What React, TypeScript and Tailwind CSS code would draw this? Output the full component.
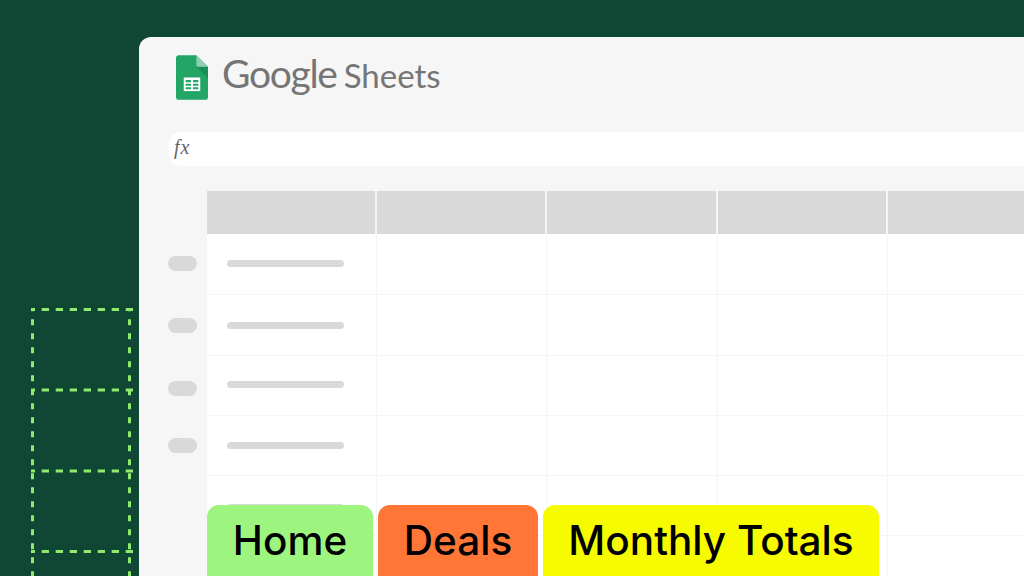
const columns = ['w-[170px]', 'w-[171px]', 'w-[170px]', 'flex-1']

const rows = [
  { height: 'h-[61px]', handle: 'mt-[-3px]', bar: 'mt-[-2px]' },
  { height: 'h-[61px]', handle: 'mt-[-1px]', bar: 'mt-[1px]' },
  { height: 'h-[60px]', handle: 'mt-[5px]', bar: 'mt-[-2px]' },
  { height: 'h-[60px]', handle: 'mt-[-2px]', bar: 'mt-[-1px]' },
]

const SheetsIcon = () => (
  <svg width="32" height="45" viewBox="0 0 33 46" className="shrink-0">
    <path d="M3 0H21L33 12V43a3 3 0 0 1-3 3H3a3 3 0 0 1-3-3V3a3 3 0 0 1 3-3Z" fill="#23a566" />
    <path d="M21 12L33 24V12Z" fill="#1c8f57" />
    <path d="M21 0L33 12H23a2 2 0 0 1-2-2Z" fill="#8ed1b1" />
    <path d="M8 23H25V37H8Z" fill="#fff" />
    <path d="M10 25.5H15.5V28H10ZM17.5 25.5H23V28H17.5ZM10 29.5H15.5V31.5H10ZM17.5 29.5H23V31.5H17.5ZM10 33H15.5V35H10ZM17.5 33H23V35H17.5Z" fill="#23a566" />
  </svg>
)

// horizontal rules overshoot the right edge a little, like the reference
const DashedBoxes = () => (
  <svg width="102" height="268" viewBox="0 0 102 268" fill="none" stroke="#8fea6f" strokeWidth="3">
    <g strokeDasharray="7.3 6.7" strokeDashoffset="3.3">
      <path d="M0 1.5H102" />
      <path d="M0 82H102" />
      <path d="M0 163H102" />
      <path d="M0 243.5H102" />
    </g>
    <g strokeDasharray="6 8" strokeDashoffset="2.7">
      <path d="M1.5 0V268" />
      <path d="M98.5 0V268" />
    </g>
  </svg>
)

const Cells = () => (
  <>
    {columns.map((w) => (
      <div key={w} className={`${w} h-full border-l border-[#f5f5f5]`} />
    ))}
  </>
)

const App = () => {
  return (
    <div className="w-[1024px] h-[576px] overflow-hidden bg-[#0f4634] flex font-['Inter',sans-serif]">
      <div className="w-[139px] shrink-0 pt-[308px] pl-[31px]">
        <DashedBoxes />
      </div>

      <div className="relative flex-1 mt-[37px] bg-[#f6f6f6] rounded-tl-xl">
        <div className="h-[95px] pl-[37px] pt-[18px] flex items-start gap-[14px]">
          <SheetsIcon />
          <div className="flex items-baseline gap-[7px] text-[#757575] font-['Lato',sans-serif] mt-[-10px]">
            <span className="text-[39px] leading-[56px] tracking-[-1.3px]">Google</span>
            <span className="text-[33px] leading-[56px]">Sheets</span>
          </div>
        </div>

        <div className="ml-[30px] h-[34px] bg-white rounded-l-xl pl-[5px] pb-[4px] flex items-center font-['Liberation_Serif',serif] italic text-[20px] text-[#666666]">
          <span className="tracking-[1px]">fx</span>
        </div>

        <div className="mt-[25px] pl-[29px] flex flex-col">
          <div className="ml-[39px] h-[43px] flex gap-[2px]">
            <div className="w-[168px] bg-[#d9d9d9]" />
            <div className="w-[168px] bg-[#d9d9d9]" />
            <div className="w-[169px] bg-[#d9d9d9]" />
            <div className="w-[168px] bg-[#d9d9d9]" />
            <div className="flex-1 bg-[#d9d9d9]" />
          </div>

          {rows.map((row, i) => (
            <div key={i} className={`flex ${row.height}`}>
              <div className="w-[39px] flex items-center">
                <div className={`w-[29px] h-[15px] rounded-full bg-[#d9d9d9] ${row.handle}`} />
              </div>
              <div className="flex-1 flex bg-white border-b border-[#f5f5f5]">
                <div className="w-[169px] flex items-center pl-[20px]">
                  <div className={`w-[117px] h-[7px] rounded-full bg-[#d9d9d9] ${row.bar}`} />
                </div>
                <Cells />
              </div>
            </div>
          ))}

          <div className="flex h-[60px]">
            <div className="w-[39px]" />
            <div className="flex-1 flex bg-white border-b border-[#f5f5f5]">
              <div className="w-[169px] pl-[20px] pt-[28px]">
                <div className="w-[117px] h-[7px] rounded-full bg-[#d9d9d9]" />
              </div>
              <Cells />
            </div>
          </div>
          <div className="flex h-[40px]">
            <div className="w-[39px]" />
            <div className="flex-1 flex bg-white">
              <div className="w-[169px]" />
              <Cells />
            </div>
          </div>
        </div>

        <div className="absolute left-[68px] top-[468px] flex gap-[5px] text-black text-[40.5px] font-[450] leading-[72px]">
          <div className="w-[166px] h-[71px] rounded-t-xl bg-[#9df57f] text-center">Home</div>
          <div className="w-[160px] h-[71px] rounded-t-xl bg-[#ff7637] text-center">Deals</div>
          <div className="w-[336px] h-[71px] rounded-t-xl bg-[#f6fb00] text-center">Monthly Totals</div>
        </div>
      </div>
    </div>
  )
}

export default App
